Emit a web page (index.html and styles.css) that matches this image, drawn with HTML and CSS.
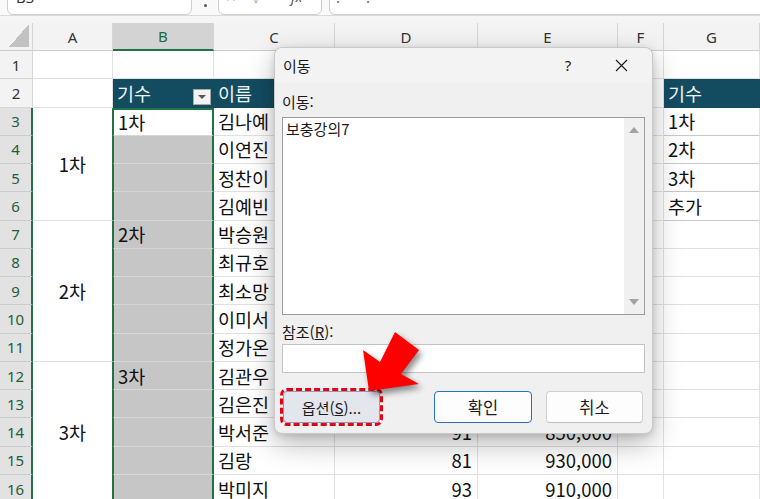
FILE: index.html
```html
<!DOCTYPE html>
<html lang="ko">
<head>
<meta charset="utf-8">
<title>이동</title>
<link rel="stylesheet" href="styles.css">
</head>
<body>
<div class="fbar">
  <div class="namebox">B3</div>
  <div class="dots"><span class="dot"></span></div>
  <div class="fxbox"><span>✕</span><span>✓</span><span class="fx">fx</span></div>
  <div class="formula"><span>:</span><span>:</span></div>
</div>

<div class="sheet">
  <div class="corner"></div>
  <div class="ch">A</div><div class="ch sel">B</div><div class="ch">C</div><div class="ch">D</div><div class="ch">E</div><div class="ch">F</div><div class="ch">G</div>

  <div class="rh">1</div><div class="c"></div><div class="c"></div><div class="c"></div><div class="c"></div><div class="c"></div><div class="c"></div><div class="c"></div>

  <div class="rh">2</div><div class="c"></div><div class="c th thb">기수<span class="filter"><i></i></span></div><div class="c th">이름</div><div class="c th">점수</div><div class="c th">수강료</div><div class="c"></div><div class="c th">기수</div>

  <div class="rh sel">3</div><div class="c m span4">1차</div><div class="c b act">1차</div><div class="c">김나예</div><div class="c r">85</div><div class="c r">820,000</div><div class="c"></div><div class="c tb">1차</div>
  <div class="rh sel">4</div><div class="c b"></div><div class="c">이연진</div><div class="c r">92</div><div class="c r">880,000</div><div class="c"></div><div class="c tb">2차</div>
  <div class="rh sel">5</div><div class="c b"></div><div class="c">정찬이</div><div class="c r">78</div><div class="c r">790,000</div><div class="c"></div><div class="c tb">3차</div>
  <div class="rh sel">6</div><div class="c b"></div><div class="c">김예빈</div><div class="c r">88</div><div class="c r">860,000</div><div class="c"></div><div class="c tb">추가</div>

  <div class="rh sel">7</div><div class="c m span5">2차</div><div class="c b">2차</div><div class="c">박승원</div><div class="c r">95</div><div class="c r">940,000</div><div class="c"></div><div class="c"></div>
  <div class="rh sel">8</div><div class="c b"></div><div class="c">최규호</div><div class="c r">73</div><div class="c r">760,000</div><div class="c"></div><div class="c"></div>
  <div class="rh sel">9</div><div class="c b"></div><div class="c">최소망</div><div class="c r">84</div><div class="c r">830,000</div><div class="c"></div><div class="c"></div>
  <div class="rh sel">10</div><div class="c b"></div><div class="c">이미서</div><div class="c r">90</div><div class="c r">900,000</div><div class="c"></div><div class="c"></div>
  <div class="rh sel">11</div><div class="c b"></div><div class="c">정가온</div><div class="c r">76</div><div class="c r">770,000</div><div class="c"></div><div class="c"></div>

  <div class="rh sel">12</div><div class="c m span5">3차</div><div class="c b">3차</div><div class="c">김관우</div><div class="c r">87</div><div class="c r">870,000</div><div class="c"></div><div class="c"></div>
  <div class="rh sel">13</div><div class="c b"></div><div class="c">김은진</div><div class="c r">82</div><div class="c r">810,000</div><div class="c"></div><div class="c"></div>
  <div class="rh sel">14</div><div class="c b"></div><div class="c">박서준</div><div class="c r">91</div><div class="c r">850,000</div><div class="c"></div><div class="c"></div>
  <div class="rh sel">15</div><div class="c b"></div><div class="c">김랑</div><div class="c r">81</div><div class="c r">930,000</div><div class="c"></div><div class="c"></div>
  <div class="rh sel">16</div><div class="c b"></div><div class="c">박미지</div><div class="c r">93</div><div class="c r">910,000</div><div class="c"></div><div class="c"></div>
</div>

<div class="dialog">
  <div class="titlebar">
    <span class="title">이동</span>
    <span class="help">?</span>
    <span class="close"><svg width="13" height="13" viewBox="0 0 13 13"><path d="M1 1 L12 12 M12 1 L1 12" stroke="#1a1a1a" stroke-width="1.1" fill="none"/></svg></span>
  </div>
  <div class="dbody">
    <div class="label">이동:</div>
    <div class="listbox">
      <div class="items"><div class="item">보충강의7</div></div>
      <div class="vscroll"><span class="up"></span><span class="down"></span></div>
    </div>
    <div class="label ref">참조(<u>R</u>):</div>
    <div class="input"></div>
    <div class="buttons">
      <button class="btn opt">옵션(<u>S</u>)...</button>
      <button class="btn ok">확인</button>
      <button class="btn cancel">취소</button>
    </div>
  </div>
</div>

<svg class="arrow" width="760" height="499" viewBox="0 0 760 499">
  <polygon points="369,391 363,350 380,362 395,332 419,350 401,374 419,384" fill="#ff0000"/>
</svg>
</body>
</html>
```

FILE: styles.css
```css
* { box-sizing: border-box; }
html, body { margin: 0; padding: 0; }
body {
  width: 760px;
  height: 499px;
  overflow: hidden;
  position: relative;
  background: #f5f5f5;
  font-family: "Noto Sans CJK KR", "Noto Sans", sans-serif;
  color: #111;
}

/* formula bar (cut off at top) */
.fbar {
  height: 16px;
  display: flex;
  align-items: flex-end;
  overflow: hidden;
  border-bottom: 1px solid #dadada;
  background: #f9f9f9;
}
.namebox, .fxbox, .formula {
  height: 28px;
  background: #fff;
  border: 1px solid #cfcfcf;
  border-radius: 6px;
  display: flex;
  align-items: center;
  padding-bottom: 9px;
  font-family: "Noto Sans", sans-serif;
  font-size: 15px;
  color: #333;
}
.namebox { margin-left: 7px; width: 185px; padding-left: 8px; }
.dots { width: 26px; height: 15px; display: flex; justify-content: center; }
.dot { width: 3px; height: 3px; border-radius: 50%; background: #555; margin-top: 4px; }
.fxbox { width: 104px; padding-left: 6px; gap: 16px; color: #b0b0b0; font-size: 14px; }
.fxbox .fx { font-style: italic; margin-left: 12px; color: #555; }
.formula { margin-left: 7px; flex: 1; margin-right: -12px; padding-left: 6px; gap: 26px; color: #666; }

/* sheet grid */
.sheet {
  margin-top: 7px;
  display: grid;
  grid-template-columns: 33px 80px 101px 121px 143px 140px 46px 96px;
  grid-template-rows: 28px repeat(16, 28.27px);
  background: #fff;
}
.corner {
  background: #f3f3f3 linear-gradient(to bottom right, transparent 50%, #c2c2c2 50%) no-repeat right 3px bottom 3px / 20px 23px;
  border-right: 1px solid #d6d6d6;
  border-bottom: 1px solid #cdcdcd;
}
.ch {
  background: #f3f3f3;
  border-right: 1px solid #d6d6d6;
  border-bottom: 1px solid #cdcdcd;
  display: flex;
  align-items: center;
  justify-content: center;
  font-family: "Noto Sans", sans-serif;
  font-size: 15px;
  color: #333;
}
.ch.sel {
  background: #d3d3d3;
  color: #1b6a3e;
  border-bottom: 2px solid #217346;
}
.rh {
  background: #f3f3f3;
  border-right: 1px solid #d6d6d6;
  border-bottom: 1px solid #d6d6d6;
  display: flex;
  align-items: center;
  justify-content: center;
  font-family: "Noto Sans", sans-serif;
  font-size: 15px;
  color: #333;
}
.rh.sel {
  background: #e2e2e2;
  color: #1f5e3b;
  border-right: 2px solid #217346;
  border-bottom-color: #cbcbcb;
}
.c {
  border-right: 1px solid #e0e0e0;
  border-bottom: 1px solid #e0e0e0;
  display: flex;
  align-items: center;
  padding: 0 4px;
  font-size: 18.5px;
  white-space: nowrap;
  overflow: hidden;
  color: #111;
}
.c.r { justify-content: flex-end; padding-right: 5px; }
.c.m {
  justify-content: center;
  border-right: 1px solid #217346;
}
.span4 { grid-row: span 4; }
.span5 { grid-row: span 5; }
.c.th {
  background: #134b61;
  color: #eef3f5;
  border-color: #134b61;
}
.c.thb { justify-content: space-between; padding-right: 2px; }
.filter {
  width: 18px;
  height: 16px;
  align-self: flex-end;
  margin-bottom: 2px;
  background: #f3f3f3;
  border: 1px solid #a8a8a8;
  display: flex;
  align-items: center;
  justify-content: center;
}
.filter i {
  width: 0; height: 0;
  border-left: 4px solid transparent;
  border-right: 4px solid transparent;
  border-top: 4px solid #555;
}
.c.b {
  background: #c6c6c6;
  border-left: 1px solid #217346;
  border-right: 2px solid #217346;
  border-bottom-color: #d6d6d6;
}
.c.b.act {
  background: #fff;
  border-top: 2px solid #217346;
}
.c.tb { border-bottom-color: #c9c9c9; }

/* dialog */
.dialog {
  position: absolute;
  left: 274px;
  top: 47px;
  width: 379px;
  height: 387px;
  background: #f0f0f0;
  border: 1px solid #c9c9c9;
  border-radius: 8px;
  box-shadow: 0 10px 28px rgba(0,0,0,0.28), 0 2px 6px rgba(0,0,0,0.12);
  display: flex;
  flex-direction: column;
  font-size: 15px;
  color: #1a1a1a;
}
.titlebar {
  height: 34px;
  display: flex;
  align-items: center;
  padding-left: 8px;
  background: #f3f3f3;
  border-radius: 8px 8px 0 0;
}
.title { flex: 1; }
.help { width: 20px; text-align: center; font-family: "Noto Sans", sans-serif; font-size: 15px; margin-right: 37px; }
.close { width: 14px; display: flex; margin-right: 23px; }
.dbody {
  padding: 10px 7px 0 7px;
  display: flex;
  flex-direction: column;
}
.label { height: 20px; line-height: 20px; }
.label.ref { margin-top: 7px; }
.listbox {
  margin-top: 5px;
  height: 198px;
  background: #fff;
  border: 1px solid #9c9c9c;
  display: flex;
}
.items { flex: 1; padding: 1px 3px; }
.item { line-height: 20px; }
.vscroll {
  width: 20px;
  background: #f0f0f0;
  display: flex;
  flex-direction: column;
  justify-content: space-between;
  align-items: center;
  padding: 9px 0 9px;
}
.up, .down {
  width: 0; height: 0;
  border-left: 5px solid transparent;
  border-right: 5px solid transparent;
}
.up { border-bottom: 6px solid #a3a3a3; }
.down { border-top: 6px solid #a3a3a3; }
.input {
  margin-top: 2px;
  height: 29px;
  background: #fff;
  border: 1px solid #c3c3c3;
}
.buttons {
  margin-top: 18px;
  display: flex;
  gap: 14px;
  padding: 0 2px 0 1px;
}
.btn {
  height: 32px;
  width: 97px;
  font-family: "Noto Sans CJK KR", "Noto Sans", sans-serif;
  font-size: 15px;
  color: #1a1a1a;
  border-radius: 4px;
  border: 1px solid #d0d0d0;
  background: #fdfdfd;
  padding: 0;
}
.btn.opt {
  background: #e4e6ee;
  border-color: #8f9bbd;
  outline: 3px dashed #e60012;
  outline-offset: 0px;
}
.btn.ok, .btn.cancel { font-size: 16.5px; }
.btn.ok { margin-left: auto; width: 98px; border-color: #2f6fc1; }
.btn.cancel { border-color: #cfcfcf; border-bottom-color: #bdbdbd; }

/* red annotation arrow */
.arrow {
  position: absolute;
  left: 0;
  top: 0;
  pointer-events: none;
  filter: drop-shadow(3px 4px 3px rgba(0,0,0,0.45));
}
```
